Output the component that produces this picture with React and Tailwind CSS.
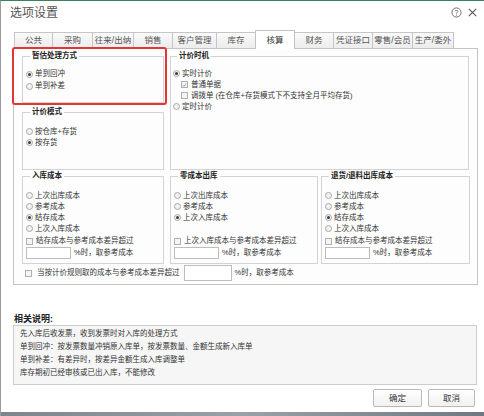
import React from 'react';

const tabs = [
  ['公共', 'w-[39px]'],
  ['采购', 'w-[41px]'],
  ['往来/出纳', 'w-[42px]'],
  ['销售', 'w-[40px]'],
  ['客户管理', 'w-[45px]'],
  ['库存', 'w-[40px]'],
  ['核算', 'w-[40px]'],
  ['财务', 'w-[40px]'],
  ['凭证接口', 'w-[40px]'],
  ['零售/会员', 'w-[41px]'],
  ['生产/委外', 'w-[42px]'],
];

const notes = [
  '先入库后收发票，收到发票时对入库的处理方式',
  '单到回冲：按发票数量冲销原入库单，按发票数量、金额生成新入库单',
  '单到补差：有差异时，按差异金额生成入库调整单',
  '库存期初已经审核或已出入库，不能修改',
];

function Radio({ on }) {
  return (
    <span className="inline-flex h-[7px] w-[7px] shrink-0 items-center justify-center rounded-full border border-[#a9a9a9] bg-[#f2f2f2]">
      {on && <span className="h-[3px] w-[3px] rounded-full bg-[#3c3c3c]" />}
    </span>
  );
}

function Check({ on }) {
  return (
    <span className="inline-flex h-[7px] w-[7px] shrink-0 items-center justify-center border border-[#b0b0b0] bg-[#f4f4f4]">
      {on && (
        <svg viewBox="0 0 8 8" className="h-[6px] w-[6px]">
          <path d="M1 4.2 L3 6.2 L7 1.5" fill="none" stroke="#8a8a8a" strokeWidth="1.2" />
        </svg>
      )}
    </span>
  );
}

function RadioRow({ on, children, h = 'h-[11px]' }) {
  return (
    <div className={`flex items-center gap-[2px] ${h}`}>
      <Radio on={on} />
      <span>{children}</span>
    </div>
  );
}

function CheckRow({ on, children, className = '' }) {
  return (
    <div className={`flex h-[12px] items-center gap-[3px] ${className}`}>
      <Check on={on} />
      <span>{children}</span>
    </div>
  );
}

function Group({ title, className = '', children }) {
  return (
    <fieldset className={`shrink-0 border border-[#d3d3d3] ${className}`}>
      <legend className="ml-[4px] px-[2px] text-[7.5px] font-bold leading-[12px] text-[#222]">{title}</legend>
      {children}
    </fieldset>
  );
}

function Limit({ label }) {
  return (
    <>
      <CheckRow className="mt-[1px]">{label}</CheckRow>
      <div className="flex h-[12px] items-center">
        <span className="h-[12px] w-[45px] border border-[#bdbdbd] bg-white" />
        <span className="ml-[3px]">%时，取参考成本</span>
      </div>
    </>
  );
}

export default function App() {
  return (
    <div className="relative flex h-[416px] w-[484px] flex-col overflow-hidden border-t border-l border-t-[#3f7d60] border-l-[#9b9b9b] bg-white font-['Liberation_Sans','Noto_Sans_CJK_SC',sans-serif] text-[7.5px] text-[#333]">
      {/* title bar */}
      <div className="flex h-[29px] items-start justify-between pl-[9px] pr-[6px] pt-[3px]">
        <span className="text-[12px] leading-[18px] text-[#555]">选项设置</span>
        <div className="flex items-center gap-[5px] pt-[3px]">
          <svg viewBox="0 0 12 12" className="h-[11px] w-[11px]">
            <circle cx="6" cy="6" r="5" fill="none" stroke="#666" strokeWidth="1" />
            <path d="M4.4 4.6 C4.4 3.4 7.6 3.3 7.6 4.7 C7.6 5.8 6 5.8 6 7.1" fill="none" stroke="#666" strokeWidth="1" />
            <circle cx="6" cy="8.8" r="0.6" fill="#666" />
          </svg>
          <svg viewBox="0 0 12 12" className="h-[11px] w-[11px]">
            <path d="M2 2 L10 10 M10 2 L2 10" stroke="#555" strokeWidth="1.2" />
          </svg>
        </div>
      </div>

      {/* tab strip */}
      <div className="flex h-[18px] items-end pl-[14px]">
        {tabs.map(([name, w]) =>
          name === '核算' ? (
            <div key={name} className={`relative z-10 -mb-[1px] -ml-px flex h-[19px] items-center justify-center border border-b-0 border-[#c2c2c2] bg-white text-[8.5px] text-[#333] ${w}`}>
              {name}
            </div>
          ) : (
            <div key={name} className={`-ml-px flex h-[16px] items-center justify-center border border-b-0 border-[#c6c6c6] bg-gradient-to-b from-[#fafafa] to-[#ececec] text-[8.5px] text-[#555] ${w}`}>
              {name}
            </div>
          )
        )}
      </div>

      {/* settings panel */}
      <div className="ml-[12px] flex h-[237px] w-[465px] flex-col border border-[#c4c4c4] bg-[#fdfdfd] pl-[8px] pt-[1px]">
        <div className="flex h-[120px]">
          <div className="flex w-[142px] flex-col">
            <Group title="暂估处理方式" className="h-[53px] pl-[3px] pt-[6px]">
              <RadioRow on h="h-[12px]">单到回冲</RadioRow>
              <RadioRow h="h-[12px]">单到补差</RadioRow>
            </Group>
            <Group title="计价模式" className="mt-[3px] h-[64px] pl-[3px] pt-[8px]">
              <RadioRow>按仓库+存货</RadioRow>
              <RadioRow on>按存货</RadioRow>
            </Group>
          </div>
          <Group title="计价时机" className="ml-[6px] h-[120px] w-[299px] pl-[2px] pt-[6px]">
            <RadioRow on>实时计价</RadioRow>
            <div className="flex h-[11px] items-center gap-[3px] pl-[8px]">
              <Check on />
              <span>普通单据</span>
            </div>
            <div className="flex h-[11px] items-center gap-[3px] pl-[8px]">
              <Check />
              <span>调拨单 (在仓库+存货模式下不支持全月平均存货)</span>
            </div>
            <RadioRow>定时计价</RadioRow>
          </Group>
        </div>

        <div className="flex h-[94px]">
          <Group title="入库成本" className="h-[94px] w-[142px] pl-[3px] pt-[8px]">
            <RadioRow>上次出库成本</RadioRow>
            <RadioRow>参考成本</RadioRow>
            <RadioRow on>结存成本</RadioRow>
            <RadioRow>上次入库成本</RadioRow>
            <Limit label="结存成本与参考成本差异超过" />
          </Group>
          <Group title="零成本出库" className="ml-[6px] h-[94px] w-[148px] pl-[3px] pt-[8px]">
            <RadioRow>上次出库成本</RadioRow>
            <RadioRow>参考成本</RadioRow>
            <RadioRow on>上次入库成本</RadioRow>
            <div className="h-[11px]" />
            <Limit label="上次入库成本与参考成本差异超过" />
          </Group>
          <Group title="退货/退料出库成本" className="ml-[3px] h-[94px] w-[149px] pl-[3px] pt-[8px]">
            <RadioRow>上次出库成本</RadioRow>
            <RadioRow>参考成本</RadioRow>
            <RadioRow on>结存成本</RadioRow>
            <RadioRow>上次入库成本</RadioRow>
            <Limit label="结存成本与参考成本差异超过" />
          </Group>
        </div>

        <div className="mt-[1px] flex h-[16px] items-center pl-[3px]">
          <Check />
          <span className="ml-[5px]">当按计价规则取的成本与参考成本差异超过</span>
          <span className="ml-[4px] h-[16px] w-[48px] border border-[#bdbdbd] bg-white" />
          <span className="ml-[3px]">%时，取参考成本</span>
        </div>
      </div>

      {/* notes */}
      <div className="ml-[13px] mt-[28px] text-[9px] font-bold leading-[12px] text-[#222]">相关说明:</div>
      <div className="ml-[12px] h-[60px] w-[464px] border border-[#cdcdcd] bg-[#f6f6f6] pl-[6px] pt-[1px] leading-[13px]">
        {notes.map((line) => (
          <div key={line}>{line}</div>
        ))}
      </div>

      <div className="mt-[4px] flex justify-end gap-[6px] pr-[9px]">
        <button className="h-[18px] w-[49px] rounded-[2px] border border-[#b9b9b9] bg-gradient-to-b from-white to-[#f1f1f1] text-[8.5px] text-[#333]">确定</button>
        <button className="h-[18px] w-[47px] rounded-[2px] border border-[#b9b9b9] bg-gradient-to-b from-white to-[#f1f1f1] text-[8.5px] text-[#333]">取消</button>
      </div>

      <div className="mt-auto h-[4px] bg-gradient-to-r from-[#7d858c] via-[#9aa2a8] to-[#6f7880]" />

      {/* highlight around the first group */}
      <div className="pointer-events-none absolute left-[11px] top-[46px] h-[58px] w-[155px] rounded-[3px] border-2 border-[#e23535]" />
    </div>
  );
}
